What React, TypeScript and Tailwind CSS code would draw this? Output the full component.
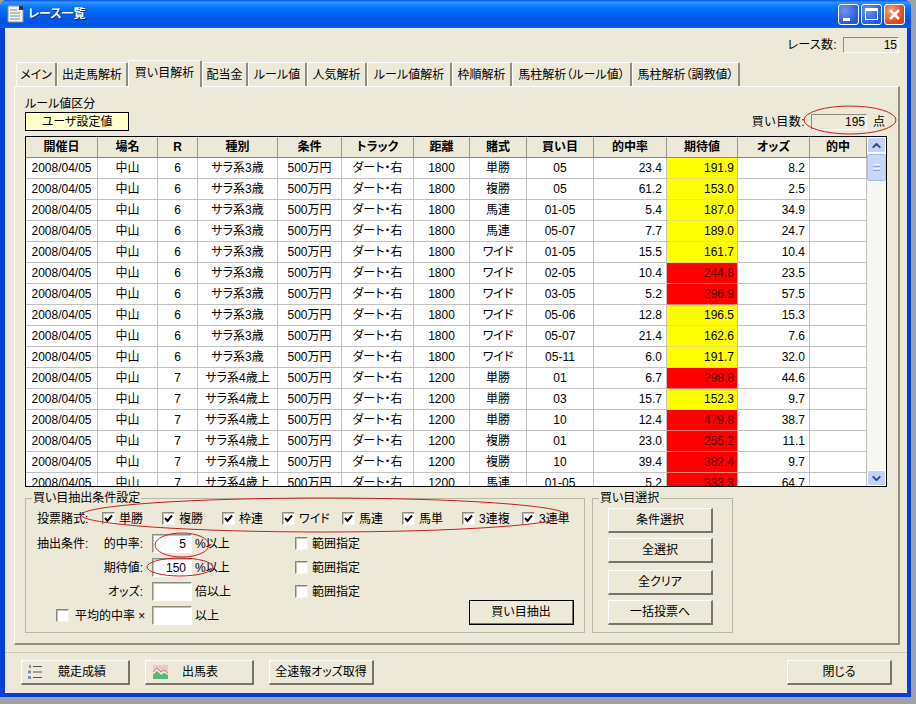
import { ChevronDown, ChevronUp } from "lucide-react";

const tabs = [
  { label: "メイン", w: "w-[41px]" },
  { label: "出走馬解析", w: "w-[71px]" },
  { label: "買い目解析", w: "w-[74px]", active: true },
  { label: "配当金", w: "w-[46px]" },
  { label: "ルール値", w: "w-[59px]" },
  { label: "人気解析", w: "w-[60px]" },
  { label: "ルール値解析", w: "w-[85px]" },
  { label: "枠順解析", w: "w-[60px]" },
  { label: "馬柱解析（ルール値）", w: "w-[120px]" },
  { label: "馬柱解析（調教値）", w: "w-[108px]" },
];

const columns = [
  { label: "開催日", w: "w-[72px]" },
  { label: "場名", w: "w-[60px]" },
  { label: "R", w: "w-[40px]" },
  { label: "種別", w: "w-[80px]" },
  { label: "条件", w: "w-[64px]" },
  { label: "トラック", w: "w-[72px]" },
  { label: "距離", w: "w-[56px]" },
  { label: "賭式", w: "w-[57px]" },
  { label: "買い目", w: "w-[67px]" },
  { label: "的中率", w: "w-[73px]" },
  { label: "期待値", w: "w-[71px]" },
  { label: "オッズ", w: "w-[72px]" },
  { label: "的中", w: "w-[57px]" },
];

// R, 賭式, 買い目, 的中率, 期待値, オッズ
const rows: [number, string, string, string, string, string][] = [
  [6, "単勝", "05", "23.4", "191.9", "8.2"],
  [6, "複勝", "05", "61.2", "153.0", "2.5"],
  [6, "馬連", "01-05", "5.4", "187.0", "34.9"],
  [6, "馬連", "05-07", "7.7", "189.0", "24.7"],
  [6, "ワイド", "01-05", "15.5", "161.7", "10.4"],
  [6, "ワイド", "02-05", "10.4", "244.8", "23.5"],
  [6, "ワイド", "03-05", "5.2", "296.9", "57.5"],
  [6, "ワイド", "05-06", "12.8", "196.5", "15.3"],
  [6, "ワイド", "05-07", "21.4", "162.6", "7.6"],
  [6, "ワイド", "05-11", "6.0", "191.7", "32.0"],
  [7, "単勝", "01", "6.7", "298.8", "44.6"],
  [7, "単勝", "03", "15.7", "152.3", "9.7"],
  [7, "単勝", "10", "12.4", "479.8", "38.7"],
  [7, "複勝", "01", "23.0", "255.2", "11.1"],
  [7, "複勝", "10", "39.4", "382.4", "9.7"],
  [7, "馬連", "01-05", "5.2", "333.3", "64.7"],
];

const betTypes = ["単勝", "複勝", "枠連", "ワイド", "馬連", "馬単", "3連複", "3連単"];

const Checkbox: React.FC<{ checked?: boolean }> = ({ checked }) => (
  <span className="flex h-[13px] w-[13px] shrink-0 items-center justify-center border border-t-[#8a887c] border-l-[#8a887c] border-r-[#f4f3ec] border-b-[#f4f3ec] bg-white shadow-[inset_1px_1px_0_#c4c2b4]">
    {checked && (
      <svg width="9" height="9" viewBox="0 0 9 9">
        <path d="M1 4 L3.5 7 L8 1.5" fill="none" stroke="#000" strokeWidth="2" />
      </svg>
    )}
  </span>
);

const Button: React.FC<{ className?: string; children: React.ReactNode }> = ({ className, children }) => (
  <button className={`flex h-[25px] items-center justify-center border-t border-l border-t-white border-l-white border-r-2 border-b-2 border-r-[#77756a] border-b-[#77756a] bg-[#ece9d8] ${className ?? ""}`}>
    {children}
  </button>
);

const Sunken: React.FC<{ className?: string; children?: React.ReactNode }> = ({ className, children }) => (
  <div className={`flex items-center justify-end border border-t-[#8f8d80] border-l-[#8f8d80] border-r-white border-b-white ${className ?? ""}`}>
    {children}
  </div>
);

const Input: React.FC<{ value?: string }> = ({ value }) => (
  <Sunken className="h-[19px] w-[40px] shrink-0 bg-white pr-[5px] shadow-[inset_1px_1px_0_#c4c2b4]">{value}</Sunken>
);

const ConditionRow: React.FC<{ left?: string; label: string; value?: string; unit: string }> = ({ left, label, value, unit }) => (
  <div className="flex h-[19px] items-center">
    <div className="flex w-[115px] justify-between pr-[9px]">
      <span>{left}</span>
      <span>{label}</span>
    </div>
    <Input value={value} />
    <span className="ml-[3px] w-[100px]">{unit}</span>
    <Checkbox />
    <span className="ml-1">範囲指定</span>
  </div>
);

const ListIcon = () => (
  <svg width="16" height="16" viewBox="0 0 16 16">
    <path d="M2 1h2v3H2zM1 6.500h3v3H1zM1 12h3v3H1z" fill="#7f8fac" />
    <path d="M6 2.500h9M6 8h9M6 13.500h9" stroke="#555" strokeWidth="1" />
  </svg>
);

const ChartIcon = () => (
  <svg width="15" height="14" viewBox="0 0 15 14">
    <rect width="15" height="14" fill="#ecc8c4" />
    <path d="M0 7 L4 3 L8 7 L11 5 L15 8 V14 H0 Z" fill="#e8e4d8" />
    <path d="M0 10 L4 6 L8 10 L11 8 L15 10 V14 H0 Z" fill="#58b878" />
    <path d="M0 7 L4 3 L8 7 L11 5 L15 8" fill="none" stroke="#c08080" />
  </svg>
);

const CaptionButton: React.FC<{ red?: boolean; children: React.ReactNode }> = ({ red, children }) => (
  <div className={`flex h-[21px] w-[21px] items-center justify-center rounded-[3px] border border-white ${red ? "bg-[radial-gradient(circle_at_30%_30%,#f0a080,#d8481c_70%)]" : "bg-[radial-gradient(circle_at_30%_30%,#6c98f4,#2458dc_75%)]"}`}>
    {children}
  </div>
);

export default function App() {
  return (
    <div className="relative h-[704px] w-[916px] overflow-hidden bg-[#a1a1a9] font-['Liberation_Sans','Noto_Sans_CJK_JP',sans-serif] text-[12px] leading-[14px] text-black [font-feature-settings:'palt']">
      <div className="h-[697px] w-[911px] overflow-hidden rounded-t-[7px] bg-[#0a3ed8]">
        {/* タイトルバー */}
        <div className="flex h-[28px] items-center bg-[linear-gradient(180deg,#0058ee_0%,#3593ff_8%,#288eff_12%,#127dff_20%,#036ffc_32%,#0262ee_52%,#0057e5_68%,#0054e3_84%,#0055eb_92%,#005bf5_96%,#026afe_100%)] pl-[7px] pr-[6px]">
          <svg width="17" height="18" viewBox="0 0 17 18">
            <path d="M1 1h11l4 4v12H1z" fill="#f4f4f0" stroke="#8c949c" />
            <path d="M12 1h4v4h-4z" fill="#30343c" />
            <path d="M3 5h7M3 8h10M3 11h10M3 14h10" stroke="#7c8894" />
          </svg>
          <span className="ml-1 font-bold text-white [text-shadow:1px_1px_0_#0a2a90]">レース一覧</span>
          <div className="ml-auto flex gap-[2px]">
            <CaptionButton>
              <span className="mt-[10px] mr-[5px] h-[3px] w-[7px] bg-white" />
            </CaptionButton>
            <CaptionButton>
              <span className="h-[12px] w-[13px] border border-t-[3px] border-white" />
            </CaptionButton>
            <CaptionButton red>
              <svg width="13" height="13" viewBox="0 0 13 13">
                <path d="M2 2 L11 11 M11 2 L2 11" stroke="#fff" strokeWidth="2.500" />
              </svg>
            </CaptionButton>
          </div>
        </div>

        <div className="mx-[4px] ml-[5px] h-[665px] bg-[#ece9d8]">
          {/* レース数 */}
          <div className="flex items-center justify-end pt-[9px] pr-[8px]">
            <span className="tracking-[0.3px]">レース数:</span>
            <Sunken className="ml-[6px] h-[16px] w-[56px] pr-[1px]">15</Sunken>
          </div>

          {/* タブ */}
          <div className="relative z-10 mt-[7px] -mb-px ml-[11px] flex h-[27px] items-start">
            {tabs.map((tab) =>
              tab.active ? (
                <div key={tab.label} className={`flex h-[27px] items-center justify-center rounded-t-[2px] border-t border-l border-r-2 border-t-white border-l-white border-r-[#8f8d80] bg-[#ece9d8] pb-[2px] ${tab.w}`}>
                  {tab.label}
                </div>
              ) : (
                <div key={tab.label} className={`mt-[2px] flex h-[24px] items-center justify-center whitespace-nowrap rounded-t-[2px] border-t border-l border-r-2 border-t-white border-l-white border-r-[#8f8d80] ${tab.w}`}>
                  {tab.label}
                </div>
              )
            )}
          </div>

          {/* パネル */}
          <div className="ml-[9px] h-[559px] w-[886px] border border-t-white border-l-white border-r-2 border-b-2 border-r-[#8f8d80] border-b-[#8f8d80] pt-[10px] pl-[10px]">
            <div className="flex w-[863px] items-end justify-between">
              <div>
                <div>ルール値区分</div>
                <div className="mt-[1px] flex h-[19px] w-[104px] items-center justify-center border border-black bg-[#ffffc8]">ユーザ設定値</div>
              </div>
              <div className="mr-[3px] mb-[1px] flex items-center">
                <span className="tracking-[0.5px]">買い目数:</span>
                <Sunken className="ml-[6px] h-[16px] w-[56px] pr-[1px]">195</Sunken>
                <span className="ml-[6px] w-[12px]">点</span>
              </div>
            </div>

            {/* 買い目一覧 */}
            <div className="mt-[5px] flex h-[351px] w-[862px] overflow-hidden border border-black bg-white">
              <table className="w-[841px] shrink-0 table-fixed border-separate border-spacing-0 self-start">
                <thead>
                  <tr>
                    {columns.map((c) => (
                      <th key={c.label} className={`h-[21px] border-r border-b border-r-[#9a988a] border-b-[#8a887c] bg-[#ece9d8] p-0 text-center font-bold ${c.w}`}>
                        {c.label}
                      </th>
                    ))}
                  </tr>
                </thead>
                <tbody>
                  {rows.map((row, i) => {
                    const [r, shiki, me, rate, exp, odds] = row;
                    const cell = "h-[21px] border-r border-b border-[#c0c0c0] p-0 text-center font-normal";
                    const num = "h-[21px] border-r border-b border-[#c0c0c0] p-0 pr-1 text-right";
                    const isRed = Number(exp) >= 200;
                    return (
                      <tr key={i}>
                        <td className={cell}>2008/04/05</td>
                        <td className={cell}>中山</td>
                        <td className={cell}>{r}</td>
                        <td className={cell}>{r === 6 ? "サラ系3歳" : "サラ系4歳上"}</td>
                        <td className={cell}>500万円</td>
                        <td className={cell}>ダート・右</td>
                        <td className={cell}>{r === 6 ? "1800" : "1200"}</td>
                        <td className={cell}>{shiki}</td>
                        <td className={cell}>{me}</td>
                        <td className={num}>{rate}</td>
                        <td className={`h-[21px] border-r border-b p-0 pr-[3px] text-right ${isRed ? "border-r-[#c0c0c0] border-b-[#ff7878] bg-[#ff0000] text-[#5a0000]" : "border-r-[#c0c0c0] border-b-[#e4e458] bg-[#ffff00]"}`}>{exp}</td>
                        <td className={num}>{odds}</td>
                        <td className={cell}></td>
                      </tr>
                    );
                  })}
                </tbody>
              </table>

              {/* スクロールバー */}
              <div className="flex w-[20px] flex-col bg-[#f7f7f1]">
                <div className="flex h-[16px] items-center justify-center rounded-[2px] border border-white bg-[#c3d3f7]">
                  <ChevronUp size={13} strokeWidth={3.5} color="#2a4a8c" />
                </div>
                <div className="mt-[1px] flex h-[27px] flex-col items-center justify-center gap-[1px] rounded-[2px] border border-[#a8bff0] bg-[#c8d6f8]">
                  <span className="h-px w-[7px] bg-[#eef2fd]" />
                  <span className="h-px w-[7px] bg-[#8ea8e0]" />
                  <span className="h-px w-[7px] bg-[#eef2fd]" />
                  <span className="h-px w-[7px] bg-[#8ea8e0]" />
                </div>
                <div className="mt-auto flex h-[16px] items-center justify-center rounded-[2px] border border-white bg-[#c3d3f7]">
                  <ChevronDown size={13} strokeWidth={3.5} color="#2a4a8c" />
                </div>
              </div>
            </div>

            <div className="mt-[4px] flex items-start gap-[7px]">
              {/* 買い目抽出条件設定 */}
              <fieldset className="h-[142px] w-[560px] min-w-0 border border-[#b8b6a4] pr-[10px] pl-[11px]">
                <legend className="ml-[-5px] h-[14px] px-px">買い目抽出条件設定</legend>
                <div className="mt-[7px] flex h-[13px] items-center">
                  <span className="w-[65px] shrink-0">投票賭式:</span>
                  {betTypes.map((b) => (
                    <div key={b} className="flex w-[60px] shrink-0 items-center">
                      <Checkbox checked />
                      <span className="ml-[4px] whitespace-nowrap">{b}</span>
                    </div>
                  ))}
                </div>
                <div className="mt-[9px] flex items-end justify-between">
                  <div className="flex flex-col gap-[5px]">
                    <ConditionRow left="抽出条件:" label="的中率:" value="5" unit="%以上" />
                    <ConditionRow label="期待値:" value="150" unit="%以上" />
                    <ConditionRow label="オッズ:" unit="倍以上" />
                    <div className="flex h-[19px] items-center pl-[19px]">
                      <Checkbox />
                      <span className="ml-[6px] w-[77px] whitespace-nowrap">平均的中率 ×</span>
                      <Input />
                      <span className="ml-[3px]">以上</span>
                    </div>
                  </div>
                  <Button className="w-[105px] outline outline-1 -outline-offset-1 outline-black">買い目抽出</Button>
                </div>
              </fieldset>

              {/* 買い目選択 */}
              <fieldset className="h-[142px] w-[141px] min-w-0 border border-[#b8b6a4] pl-[15px]">
                <legend className="ml-[-9px] h-[14px] px-px">買い目選択</legend>
                <Button className="mt-[3px] w-[105px]">条件選択</Button>
                <Button className="mt-[5px] w-[105px]">全選択</Button>
                <Button className="mt-[7px] w-[105px]">全クリア</Button>
                <Button className="mt-[5px] w-[105px]">一括投票へ</Button>
              </fieldset>
            </div>
          </div>

          {/* フッター */}
          <div className="mt-[7px] flex border-t border-[#cfccb8] pt-[7px] pr-[15px] pl-[16px]">
            <Button className="w-[109px] justify-start pl-[5px]">
              <ListIcon />
              <span className="ml-[15px]">競走成績</span>
            </Button>
            <Button className="ml-[15px] w-[109px] justify-start pl-[7px]">
              <ChartIcon />
              <span className="ml-[14px]">出馬表</span>
            </Button>
            <Button className="ml-[15px] w-[105px]">全速報オッズ取得</Button>
            <Button className="ml-auto w-[105px]">閉じる</Button>
          </div>
        </div>
      </div>

      {/* 赤丸の書き込み */}
      <svg className="pointer-events-none absolute inset-0 z-20" width="916" height="704" fill="none" stroke="#c81e1e" strokeWidth="1">
        <ellipse cx="850" cy="120" rx="46" ry="14" />
        <ellipse cx="324" cy="515" rx="243" ry="17" />
        <ellipse cx="182" cy="545" rx="27" ry="12" />
        <ellipse cx="180" cy="567" rx="33" ry="9" />
      </svg>
    </div>
  );
}
